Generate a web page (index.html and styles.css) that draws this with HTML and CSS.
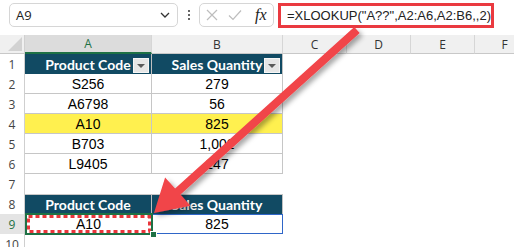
FILE: index.html
```html
<!DOCTYPE html>
<html>
<head>
<meta charset="utf-8">
<link rel="stylesheet" href="styles.css">
</head>
<body>
<div class="app">
  <div class="toolbar">
    <div class="namebox">
      <span class="nb-text">A9</span>
      <svg class="chev" width="10" height="6" viewBox="0 0 10 6"><path d="M1 1 L5 5 L9 1" fill="none" stroke="#333" stroke-width="1.3"/></svg>
    </div>
    <div class="dots"><i></i><i></i><i></i></div>
    <div class="fxgroup">
      <svg class="ico" width="12" height="12" viewBox="0 0 12 12"><path d="M1 1 L11 11 M11 1 L1 11" stroke="#bdbdbd" stroke-width="1.2" fill="none"/></svg>
      <svg class="ico" width="14" height="12" viewBox="0 0 14 12"><path d="M1 6.5 L5 10.5 L13 1.5" stroke="#bdbdbd" stroke-width="1.2" fill="none"/></svg>
      <span class="fx">fx</span>
    </div>
    <div class="formula">=XLOOKUP("A??",A2:A6,A2:B6,,2)</div>
  </div>

  <div class="sheet">
    <div class="corner"><svg width="14" height="14" viewBox="0 0 14 14"><path d="M14 0 L14 14 L0 14 Z" fill="#d2d2d2"/></svg></div>
    <div class="ch ch-sel">A</div>
    <div class="ch">B</div>
    <div class="ch">C</div>
    <div class="ch">D</div>
    <div class="ch">E</div>
    <div class="ch">F</div>

    <div class="rh">1</div>
    <div class="th">Product Code<span class="filt"><i></i></span></div>
    <div class="th">Sales Quantity<span class="filt"><i></i></span></div>
    <div class="c"></div><div class="c"></div><div class="c"></div><div class="c"></div>

    <div class="rh">2</div>
    <div class="td">S256</div><div class="td">279</div>
    <div class="c"></div><div class="c"></div><div class="c"></div><div class="c"></div>

    <div class="rh">3</div>
    <div class="td">A6798</div><div class="td">56</div>
    <div class="c"></div><div class="c"></div><div class="c"></div><div class="c"></div>

    <div class="rh">4</div>
    <div class="td hl">A10</div><div class="td hl">825</div>
    <div class="c"></div><div class="c"></div><div class="c"></div><div class="c"></div>

    <div class="rh">5</div>
    <div class="td">B703</div><div class="td">1,002</div>
    <div class="c"></div><div class="c"></div><div class="c"></div><div class="c"></div>

    <div class="rh">6</div>
    <div class="td">L9405</div><div class="td">147</div>
    <div class="c"></div><div class="c"></div><div class="c"></div><div class="c"></div>

    <div class="rh">7</div>
    <div class="c"></div><div class="c"></div>
    <div class="c"></div><div class="c"></div><div class="c"></div><div class="c"></div>

    <div class="rh">8</div>
    <div class="th th2">Product Code</div>
    <div class="th th2">Sales Quantity</div>
    <div class="c"></div><div class="c"></div><div class="c"></div><div class="c"></div>

    <div class="rh rh-sel">9</div>
    <div class="td2 active">A10
      <svg class="selbox" width="128" height="22" viewBox="0 0 128 22">
        <rect x="1" y="1" width="126" height="20" fill="none" stroke="#1e7145" stroke-width="2"/>
        <rect x="3.5" y="3.5" width="121" height="15" fill="none" stroke="#e9363b" stroke-width="3" stroke-dasharray="4 3"/>
      </svg>
      <span class="handle"></span>
    </div>
    <div class="td2 blue">825</div>
    <div class="c"></div><div class="c"></div><div class="c"></div><div class="c"></div>

    <div class="rh">10</div>
    <div class="c"></div><div class="c"></div>
    <div class="c"></div><div class="c"></div><div class="c"></div><div class="c"></div>
  </div>

  <svg class="arrow" width="514" height="247" viewBox="0 0 514 247">
    <defs>
      <filter id="sh" x="-20%" y="-20%" width="140%" height="140%">
        <feDropShadow dx="3" dy="3" stdDeviation="2.5" flood-color="#000" flood-opacity="0.35"/>
      </filter>
    </defs>
    <polygon filter="url(#sh)" fill="#f1444a" points="354.3,27 359.7,33 180.5,194.6 190.5,205.7 154,213 165.1,177.5 175.1,188.6"/>
  </svg>
</div>
</body>
</html>
```
FILE: styles.css
```css
* { box-sizing: border-box; }
html, body { margin: 0; padding: 0; background: #fff; }
.app { position: relative; width: 514px; height: 247px; overflow: hidden; }

.toolbar {
  display: flex;
  align-items: flex-start;
  height: 35px;
  padding: 3px 0 0 9px;
}
.namebox {
  width: 169px;
  height: 24px;
  border: 1px solid #d6d6d6;
  border-radius: 5px;
  display: flex;
  align-items: center;
  justify-content: space-between;
  padding: 0 7px 0 6px;
  font-family: "Open Sans", sans-serif;
  font-size: 13px;
  color: #222;
}
.dots {
  width: 21px;
  height: 24px;
  display: flex;
  flex-direction: column;
  align-items: center;
  justify-content: center;
  gap: 2px;
}
.dots i { display: block; width: 2px; height: 2px; background: #333; border-radius: 1px; }
.fxgroup {
  width: 75px;
  height: 24px;
  border: 1px solid #d6d6d6;
  border-radius: 5px;
  display: flex;
  align-items: center;
  padding-left: 6px;
  gap: 10px;
}
.fx {
  font-family: "Liberation Serif", serif;
  font-style: italic;
  font-size: 16px;
  color: #222;
  margin-left: 3px;
}
.formula {
  margin-left: 4px;
  width: 216px;
  height: 25px;
  border: 3px solid #ea3a40;
  font-family: "Liberation Sans", Arial, sans-serif;
  font-size: 13px;
  line-height: 19px;
  padding-left: 6px;
  color: #222;
  white-space: nowrap;
}

.sheet {
  display: grid;
  grid-template-columns: 25px 127px 131px 64px 64px 64px 60px;
  grid-template-rows: 19px repeat(10, 20px);
  font-family: "Liberation Sans Narrow", "Liberation Sans", Arial, sans-serif;
  font-size: 14px;
}
.corner {
  background: #f0f0f0;
  border-bottom: 1px solid #c8c8c8;
  border-right: 1px solid #d0d0d0;
  display: flex;
  align-items: flex-end;
  justify-content: flex-end;
  padding: 0 2px 2px 0;
}
.ch {
  background: #f0f0f0;
  border-right: 1px solid #d6d6d6;
  border-bottom: 1px solid #c8c8c8;
  display: flex;
  align-items: center;
  justify-content: center;
  font-family: "Open Sans", sans-serif;
  font-size: 12px;
  color: #333;
}
.ch-sel {
  background: #dcdcdc;
  color: #1e7145;
  border-bottom: 2px solid #1e7145;
}
.rh {
  background: #fff;
  border-right: 1px solid #cfcfcf;
  display: flex;
  align-items: center;
  justify-content: center;
  font-family: "Open Sans", sans-serif;
  font-size: 12px;
  color: #444;
}
.rh-sel { background: #e4e4e4; color: #1e7145; }
.c { background: #fff; }

.th {
  position: relative;
  background: #114a63;
  color: #fff;
  font-family: Lato, sans-serif;
  font-weight: 700;
  font-size: 14px;
  display: flex;
  align-items: center;
  justify-content: center;
  border-right: 1px solid #c0c0c0;
}
.th2 { border-top: 1px solid #c8c8c8; }
.filt {
  position: absolute;
  right: 2px;
  top: 4px;
  width: 16px;
  height: 15px;
  background: #e6e6e6;
  border: 1px solid #f6f6f6;
  display: flex;
  align-items: center;
  justify-content: center;
}
.filt i {
  display: block;
  width: 0; height: 0;
  border-left: 4px solid transparent;
  border-right: 4px solid transparent;
  border-top: 4px solid #5a5a5a;
}
.td, .td2 {
  display: flex;
  align-items: center;
  justify-content: center;
  color: #000;
  background: #fff;
}
.td {
  border-right: 1px solid #c6c6c6;
  border-bottom: 1px solid #c6c6c6;
}
.hl { background: #fff04f; }
.active { position: relative; }
.selbox { position: absolute; left: 0; top: -1px; }
.handle {
  position: absolute;
  right: -4px;
  bottom: -3px;
  width: 5px;
  height: 5px;
  background: #1e7145;
  outline: 1px solid #fff;
}
.blue { border: 1px solid #2f66c8; border-left: none; }

.arrow { position: absolute; left: 0; top: 0; pointer-events: none; }
```
